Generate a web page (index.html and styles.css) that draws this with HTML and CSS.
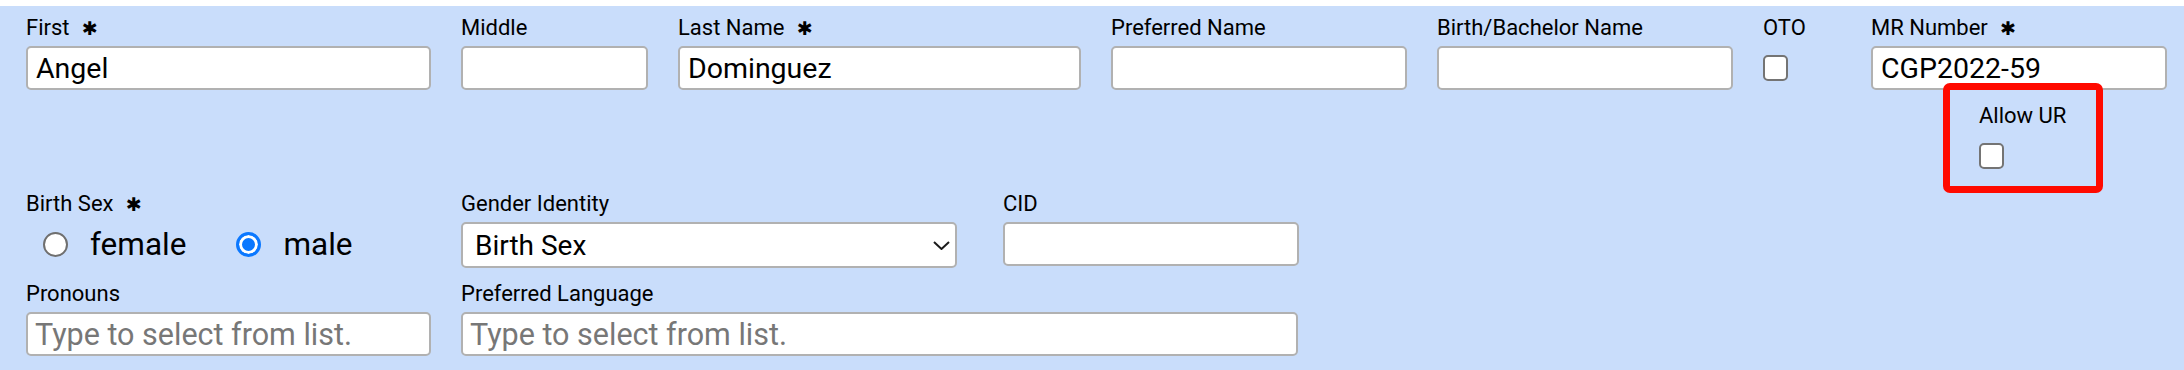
FILE: index.html
```html
<!DOCTYPE html>
<html lang="en">
<head>
    <meta charset="UTF-8">
    <meta name="viewport" content="width=device-width, initial-scale=1.0">
    <title>Patient Demographics</title>
    <link rel="stylesheet" href="styles.css">
</head>
<body>

    <form class="patient-form">
        <!-- Names -->
        <div class="row">
            <div class="field col-first">
                <label for="first">First <span class="req">&#10033;</span></label>
                <input type="text" id="first" value="Angel">
            </div>
            <div class="field col-middle">
                <label for="middle">Middle</label>
                <input type="text" id="middle">
            </div>
            <div class="field col-last">
                <label for="last">Last Name <span class="req">&#10033;</span></label>
                <input type="text" id="last" value="Dominguez">
            </div>
            <div class="field col-std">
                <label for="preferred">Preferred Name</label>
                <input type="text" id="preferred">
            </div>
            <div class="field col-std">
                <label for="bachelor">Birth/Bachelor Name</label>
                <input type="text" id="bachelor">
            </div>
            <div class="field col-oto">
                <label for="oto">OTO</label>
                <div class="check-wrap"><input type="checkbox" id="oto"></div>
            </div>
            <div class="field col-std">
                <label for="mr">MR Number <span class="req">&#10033;</span></label>
                <input type="text" id="mr" value="CGP2022-59">
            </div>
        </div>

        <!-- Allow UR (highlighted) -->
        <div class="row row-ur">
            <div class="field field-ur">
                <span class="highlight"></span>
                <label for="allow-ur">Allow UR</label>
                <div class="check-wrap"><input type="checkbox" id="allow-ur"></div>
            </div>
        </div>

        <!-- Sex / gender -->
        <div class="row">
            <div class="field col-first">
                <label>Birth Sex <span class="req">&#10033;</span></label>
                <div class="radios">
                    <label class="radio"><input type="radio" name="sex" value="female"> female</label>
                    <label class="radio"><input type="radio" name="sex" value="male" checked> male</label>
                </div>
            </div>
            <div class="field col-gender">
                <label for="gender">Gender Identity</label>
                <div class="select-wrap">
                    <select id="gender">
                        <option>Birth Sex</option>
                    </select>
                    <svg class="chevron" width="17" height="9" viewBox="0 0 17 9"><path d="M1 1 L8.5 8 L16 1" fill="none" stroke="#1b1b1b" stroke-width="2"/></svg>
                </div>
            </div>
            <div class="field col-std">
                <label for="cid">CID</label>
                <input type="text" id="cid">
            </div>
        </div>

        <!-- Pronouns / language -->
        <div class="row">
            <div class="field col-first">
                <label for="pronouns">Pronouns</label>
                <input type="text" class="lookup" id="pronouns" placeholder="Type to select from list.">
            </div>
            <div class="field col-lang">
                <label for="language">Preferred Language</label>
                <input type="text" class="lookup" id="language" placeholder="Type to select from list.">
            </div>
        </div>
    </form>

</body>
</html>
```

FILE: styles.css
```css
body {
    margin: 0;
    padding-top: 6px;
    background: #fff;
    font-family: Roboto, "Liberation Sans", sans-serif;
    color: #000;
}
.patient-form {
    background-color: #c9ddfb;
    padding: 10px 0 20px 26px;
    min-height: 334px;
    box-sizing: border-box;
    display: flex;
    flex-direction: column;
    gap: 14px;
}
.row {
    display: flex;
    gap: 30px;
}
.field {
    display: flex;
    flex-direction: column;
    gap: 6px;
}
.field > label {
    font-size: 22px;
    line-height: 24px;
    height: 24px;
    white-space: nowrap;
}
.req {
    font-family: "DejaVu Sans", sans-serif;
    font-size: 19px;
    margin-left: 7px;
}
.col-first { width: 405px; }
.col-middle { width: 187px; }
.col-last { width: 403px; }
.col-std { width: 296px; }
.col-oto { width: 78px; }
.col-gender { width: 496px; margin-right: 16px; }
.col-lang { width: 837px; }

input[type="text"], select {
    box-sizing: border-box;
    width: 100%;
    height: 44px;
    margin: 0;
    padding: 0 8px;
    border: 2px solid #b1b1b1;
    border-radius: 5px;
    background: #fff;
    font-family: Roboto, "Liberation Sans", sans-serif;
    font-size: 28.5px;
    color: #000;
    outline: none;
}
input.lookup {
    font-size: 30.5px;
    padding-left: 7px;
}
input::placeholder {
    color: #777;
}
.check-wrap {
    height: 44px;
    display: flex;
    align-items: center;
}
input[type="checkbox"] {
    appearance: none;
    width: 25px;
    height: 26px;
    margin: 0;
    border: 2px solid #747474;
    border-radius: 5px;
    background: #fff;
}

/* Allow UR */
.row-ur {
    padding-left: 1953px;
}
.field-ur {
    position: relative;
}
.highlight {
    position: absolute;
    top: -21px;
    left: -36px;
    width: 160px;
    height: 110px;
    box-sizing: border-box;
    border: 7px solid #ff0a00;
    border-radius: 7px;
}

/* radios */
.radios {
    height: 44px;
    display: flex;
    align-items: center;
    gap: 50px;
    padding-left: 17px;
}
.radio {
    display: flex;
    align-items: center;
    gap: 22px;
    font-size: 31.5px;
}
input[type="radio"] {
    appearance: none;
    width: 25px;
    height: 25px;
    margin: 0;
    border: 2px solid #6f6f6f;
    border-radius: 50%;
    background: #fff;
}
input[type="radio"]:checked {
    border: 3px solid #0b78ff;
    background: #0b78ff;
    box-shadow: inset 0 0 0 3px #fff;
}

/* select */
.select-wrap {
    position: relative;
}
select {
    appearance: none;
    height: 46px;
    padding-left: 12px;
    font-size: 28px;
}
.chevron {
    position: absolute;
    right: 7px;
    top: 19px;
}
```
